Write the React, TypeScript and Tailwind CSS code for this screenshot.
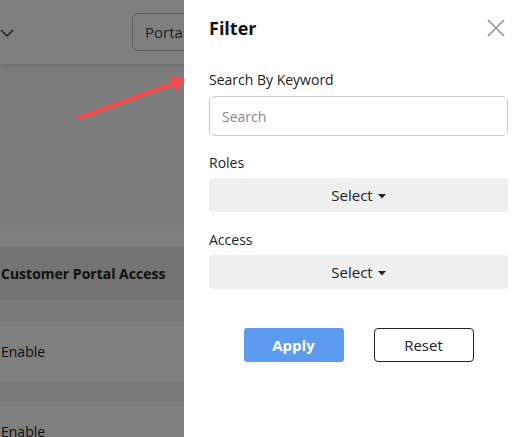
import React from 'react';

const font = { fontFamily: '"Open Sans", "Noto Sans", sans-serif' };

const Caret = () => (
  <svg width="8" height="5" viewBox="0 0 8 5" className="ml-[5px] mt-[2px]">
    <path d="M0 0 L8 0 L4 4.5 Z" fill="#222" />
  </svg>
);

const SelectBox: React.FC<{ label: string }> = ({ label }) => (
  <div className="flex flex-col">
    <label className="text-[14px] text-[#222] leading-[20px] mb-[5px]">{label}</label>
    <button className="h-[34px] w-full bg-[#efefef] rounded-[4px] flex items-center justify-center text-[15px] text-[#222]">
      Select
      <Caret />
    </button>
  </div>
);

const Background = () => (
  <div className="w-[184px] h-[437px] bg-[#f8f8f8] overflow-hidden">
    <div className="w-[532px] h-[64px] bg-white shadow-[0_2px_6px_rgba(0,0,0,0.12)] flex items-center">
      <svg width="14" height="10" viewBox="0 0 14 10" className="mt-[2px]">
        <path d="M1 2 L7 8 L13 2" stroke="#333" strokeWidth="1.3" fill="none" />
      </svg>
      <div className="ml-[118px] h-[38px] w-[200px] border border-[#bbb] rounded-[6px] flex items-center pl-[12px] text-[15px] text-[#444]">
        Portal
      </div>
    </div>
    <div className="h-[166px]" />
    <div className="bg-white h-[17px]" />
    <div className="w-[532px] h-[53px] bg-[#e6e6e6] flex items-center pl-[1px] text-[14px] font-bold text-[#222]">
      Customer Portal Access
    </div>
    <div className="h-[21px] bg-[#f4f4f4]" />
    <div className="h-[60px] bg-white flex items-center pl-[1px] text-[14px] text-[#222]">Enable</div>
    <div className="h-[20px] bg-[#f4f4f4]" />
    <div className="h-[60px] bg-white flex items-center pl-[1px] text-[14px] text-[#222]">Enable</div>
  </div>
);

export default function App() {
  return (
    <div className="relative w-[532px] h-[437px] overflow-hidden bg-[#f8f8f8]" style={font}>
      <Background />
      <div className="absolute inset-0 bg-black/50" />
      <svg className="absolute left-0 top-0" width="200" height="140" viewBox="0 0 200 140">
        <line x1="79" y1="118" x2="172" y2="84" stroke="#f44a4a" strokeWidth="4" strokeLinecap="round" />
        <path d="M187 78 L170 76 L176 92 Z" fill="#f44a4a" />
      </svg>
      <div className="absolute top-0 right-0 h-full w-[348px] bg-white pl-[25px] pr-[24px] flex flex-col">
        <div className="flex items-center justify-between h-[54px] pt-[2px]">
          <h2 className="text-[18px] font-bold text-[#111] leading-none">Filter</h2>
          <svg width="18" height="18" viewBox="0 0 18 18" className="mr-[3px]">
            <path d="M1 1 L17 17 M17 1 L1 17" stroke="#888" strokeWidth="1.4" />
          </svg>
        </div>
        <div className="flex flex-col mt-[16px]">
          <label className="text-[14px] text-[#222] leading-[20px] mb-[6px]">Search By Keyword</label>
          <input
            placeholder="Search"
            className="h-[40px] w-full border border-[#ccc] rounded-[6px] px-[12px] text-[14px] outline-none placeholder:text-[#888]"
          />
        </div>
        <div className="mt-[17px]">
          <SelectBox label="Roles" />
        </div>
        <div className="mt-[18px]">
          <SelectBox label="Access" />
        </div>
        <div className="flex justify-center gap-[30px] mt-[39px]">
          <button className="w-[100px] h-[34px] bg-[#5c9bf0] rounded-[3px] text-white font-bold text-[15px]">
            Apply
          </button>
          <button className="w-[100px] h-[34px] bg-white border border-[#222] rounded-[4px] text-[#222] text-[15px]">
            Reset
          </button>
        </div>
      </div>
    </div>
  );
}
